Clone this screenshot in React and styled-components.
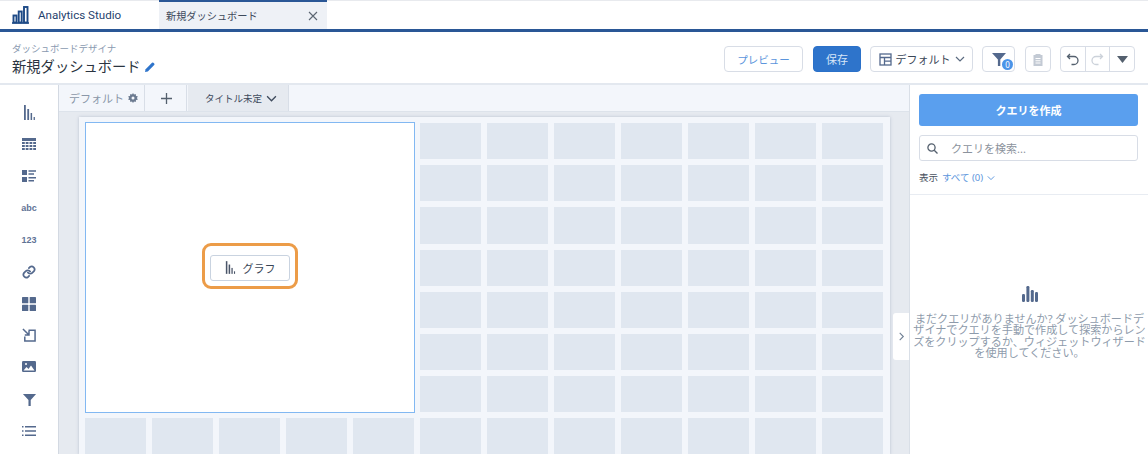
import React from "react";
import styled, { createGlobalStyle } from "styled-components";

const Global = createGlobalStyle`
  html, body { margin: 0; padding: 0; background: #fff; }
  body { width: 1148px; height: 454px; overflow: hidden; font-family: "Noto Sans", "Noto Sans CJK JP", sans-serif; color: #16325c; }
  * { box-sizing: border-box; }
`;
const Page = styled.div`width:1148px;height:454px;display:flex;flex-direction:column;overflow:hidden;`;
const TabBar = styled.div`height:32px;flex:none;display:flex;border-top:1px solid #e8eaee;border-bottom:3px solid #2a5796;background:#fff;`;
const Brand = styled.div`width:159px;display:flex;align-items:center;padding-left:12px;gap:9px;font:11.6px Roboto,sans-serif;color:#1f3f6e;svg{margin-top:-1px}`;
const OpenTab = styled.div`width:168px;margin-top:-1px;height:29px;background:#eef1f6;border-top:2px solid #2a5796;display:flex;align-items:center;justify-content:space-between;padding:0 9px 0 7px;font:10.2px "Noto Sans CJK JP",sans-serif;color:#3e4a5c;`;
const Header = styled.div`height:53px;flex:none;display:flex;justify-content:space-between;align-items:center;padding:0 13px 0 12px;border-bottom:2px solid #e3e8ef;`;
const Titles = styled.div`display:flex;flex-direction:column;gap:2px;margin-top:3px;`;
const Eyebrow = styled.div`font-size:9.5px;line-height:13px;color:#8a9ab0;`;
const TitleRow = styled.div`display:flex;align-items:center;gap:4px;font-size:14.3px;line-height:20px;color:#2b3440;`;
const Tools = styled.div`display:flex;align-items:center;margin-top:3px;`;
const Btn = styled.div`height:26px;width:${p=>p.$w}px;margin-left:${p=>p.$ml||0}px;border:1px solid ${p=>p.$primary?"#2b71c9":"#d8dde6"};border-radius:4px;background:${p=>p.$primary?"#2e74cb":"#fff"};color:${p=>p.$primary?"#d6e6f8":p.$blue?"#5b95dc":"#3a4656"};font-size:${p=>p.$fs||11}px;display:flex;align-items:center;justify-content:center;gap:${p=>p.$gap||0}px;position:relative;`;
const Group = styled.div`display:flex;margin-left:9px;height:26px;width:75px;border:1px solid #d8dde6;border-radius:4px;`;
const Seg = styled.div`flex:1;display:flex;align-items:center;justify-content:center;border-left:${p=>p.$first?"none":"1px solid #d8dde6"};`;
const Badge = styled.span`position:absolute;right:1px;bottom:1px;width:11px;height:11px;border-radius:50%;background:#4a94e8;color:#fff;font:8px/11px "Noto Sans",sans-serif;text-align:center;`;
const Body = styled.div`flex:1;display:flex;min-height:0;`;
const Rail = styled.div`width:59px;flex:none;display:flex;flex-direction:column;align-items:center;padding-top:12px;border-right:1px solid #d3d9e2;`;
const RailItem = styled.div`height:31.8px;display:flex;align-items:center;justify-content:center;flex:none;color:#5f7396;font:700 9px "Liberation Sans",sans-serif;`;
const Stage = styled.div`width:851px;flex:none;background:#e6eaf0;display:flex;flex-direction:column;position:relative;overflow:hidden;border-right:1px solid #d9dfe7;`;
const Strip = styled.div`height:27px;flex:none;background:#f3f6fb;display:flex;border-bottom:1px solid #dde3eb;padding-left:1px;`;
const StripTab = styled.div`width:${p=>p.$w}px;margin-right:1px;height:26px;display:flex;align-items:center;justify-content:center;gap:4px;padding-left:${p=>p.$pl||0}px;font-size:${p=>p.$fs||9.5}px;color:${p=>p.$c||"#3e4a5c"};background:${p=>p.$active?"#e6eaf0":"#f3f6fb"};border-right:1px solid #d8dee7;`;
const Sheet = styled.div`margin:5px 0 0 20px;width:811px;padding:6px 6px 0;background:#f3f6fb;display:grid;grid-template-columns:repeat(12,61px);grid-auto-rows:36.2px;gap:6px;flex:none;box-shadow:0 0 3px rgba(120,135,160,.4);`;
const Cell = styled.div`background:#e0e7f0;`;
const Widget = styled.div`grid-column:span 5;grid-row:span 7;width:330px;height:291px;margin-top:-1px;background:#fff;border:1px solid #82b8f2;display:flex;align-items:center;justify-content:center;`;
const Callout = styled.div`padding:9px 5px 5px;border:3px solid #ec9c48;border-radius:9px;margin-bottom:4px;`;
const ChartBtn = styled.div`width:80px;height:26px;border:1px solid #c9d3e0;border-radius:3px;display:flex;align-items:center;justify-content:center;gap:7px;font-size:11px;color:#3a4656;background:#fff;`;
const Collapse = styled.div`position:absolute;right:0;top:228px;width:16px;height:47px;background:#fff;border-radius:3px 0 0 3px;display:flex;align-items:center;justify-content:center;`;
const Panel = styled.div`flex:1;display:flex;flex-direction:column;`;
const PanelTop = styled.div`padding:9px 10px 0 9px;height:110px;border-bottom:1px solid #e8ecf2;flex:none;`;
const Create = styled.div`height:32px;background:#5a9fee;border-radius:3px;color:#fff;font-size:11px;font-weight:700;display:flex;align-items:center;justify-content:center;`;
const Search = styled.div`height:26px;margin-top:9px;border:1px solid #d8dde6;border-radius:3px;display:flex;align-items:center;padding-left:7px;gap:13px;font-size:11px;color:#8b929c;`;
const Filter = styled.div`display:flex;align-items:center;gap:4px;margin-top:9px;font-size:9.5px;color:#4a5260;line-height:15px;`;
const Link = styled.span`color:#5b95dc;`;
const Empty = styled.div`display:flex;flex-direction:column;align-items:center;padding:91px 2px 0 3px;`;
const EmptyText = styled.div`margin-top:11px;font-size:11.1px;line-height:11.4px;color:#8e9bab;text-align:center;width:100%;`;

const Bars = ({c="#54698d",w=13,h=15})=>(<svg width={w} height={h} viewBox="0 0 13 15" fill={c}><rect x="1" y="0" width="1.800" height="15"/><rect x="4.300" y="4" width="1.800" height="11"/><rect x="7.600" y="8" width="1.500" height="7"/><rect x="10.600" y="12" width="1.300" height="3"/></svg>);
const Chev = ({s=10,c="#5b6b80",w=1.2,d="down"})=>(<svg width={s} height={s} viewBox="0 0 10 10" fill="none" stroke={c} strokeWidth={w}><path d={d==="down"?"M1 3l4 4 4-4":"M3 1l4 4-4 4"}/></svg>);
const Funnel = ({s=16,c="#54698d"})=>(<svg width={s} height={s} viewBox="0 0 16 16" fill={c}><path d="M1 2h14L9.300 8.500V15H6.900V8.500z"/></svg>);

export default function App(){
  const cells=Array.from({length:12*8-35});
  return <Page><Global/>
    <TabBar>
      <Brand>
        <svg width="17" height="18" viewBox="0 0 17 18" fill="none" stroke="#1d4a86" strokeWidth="1.900"><path d="M0 17h17" strokeWidth="1.600"/><rect x="1.500" y="9.500" width="3" height="7"/><rect x="6.700" y="5.500" width="3" height="11"/><rect x="12" y="1" width="3.500" height="15.500"/></svg>
        Analytics Studio
      </Brand>
      <OpenTab>新規ダッシュボード
        <svg width="10" height="10" viewBox="0 0 10 10" stroke="#5c6672" strokeWidth="1.100"><path d="M1 1l8 8M9 1l-8 8"/></svg>
      </OpenTab>
    </TabBar>
    <Header>
      <Titles>
        <Eyebrow>ダッシュボードデザイナ</Eyebrow>
        <TitleRow>新規ダッシュボード
          <svg width="10" height="10" viewBox="0 0 10 10" fill="#2e74cb"><path d="M0 10l.6-2.800L7 .8a1 1 0 0 1 1.400 0l.8.8a1 1 0 0 1 0 1.400L2.800 9.400z"/></svg>
        </TitleRow>
      </Titles>
      <Tools>
        <Btn $w={79} $blue $fs={10.5}>プレビュー</Btn>
        <Btn $w={48} $ml={10} $primary>保存</Btn>
        <Btn $w={103} $ml={9} $gap={4}>
          <svg width="13" height="13" viewBox="0 0 13 13" fill="none" stroke="#54698d" strokeWidth="1.300"><rect x="1" y="1" width="11" height="11"/><path d="M1 4.500h11M5.500 4.500V12M5.500 8.200H12"/></svg>
          デフォルト<Chev/>
        </Btn>
        <Btn $w={33} $ml={9}><Funnel/><Badge>0</Badge></Btn>
        <Btn $w={26} $ml={10}>
          <svg width="12" height="13" viewBox="0 0 12 13" fill="#c3cad4"><path d="M1.500 2h2V1h5v1h2v11h-9zM3.500 5v1h5V5zm0 2.200v1h5v-1zm0 2.200v1h5v-1z" fillRule="evenodd"/></svg>
        </Btn>
        <Group>
          <Seg $first><svg width="13" height="13" viewBox="0 0 13 13" fill="none" stroke="#54606e" strokeWidth="1.300"><path d="M4 1L1.500 3.500 4 6M1.500 3.500H8a3.500 3.500 0 0 1 0 8H5.500"/></svg></Seg>
          <Seg><svg width="13" height="13" viewBox="0 0 13 13" fill="none" stroke="#ccd2da" strokeWidth="1.300"><path d="M9 1l2.500 2.500L9 6M11.500 3.500H5a3.500 3.500 0 0 0 0 8h2.500"/></svg></Seg>
          <Seg><svg width="11" height="7" viewBox="0 0 11 7" fill="#54606e"><path d="M0 0h11L5.500 7z"/></svg></Seg>
        </Group>
      </Tools>
    </Header>
    <Body>
      <Rail>
        <RailItem><Bars/></RailItem>
        <RailItem><svg width="14" height="14" viewBox="0 0 14 14" fill="#54698d"><path d="M0 0h14v3H0z"/><path d="M0 4h2.800v2H0zM3.700 4h2.800v2H3.700zM7.500 4h2.800v2H7.500zM11.200 4H14v2h-2.800zM0 7h2.800v2H0zM3.700 7h2.800v2H3.700zM7.500 7h2.800v2H7.500zM11.200 7H14v2h-2.800zM0 10h2.800v2H0zM3.700 10h2.800v2H3.700zM7.500 10h2.800v2H7.500zM11.200 10H14v2h-2.800z"/></svg></RailItem>
        <RailItem><svg width="14" height="12" viewBox="0 0 14 12" fill="#54698d"><path d="M0 0h5v5H0zM0 7h5v5H0zM6.500 .3H14v1.500H6.500zM6.500 3.200H12v1.500H6.500zM6.500 7H14v1.500H6.500zM6.500 10H12v1.500H6.500z"/></svg></RailItem>
        <RailItem>abc</RailItem>
        <RailItem>123</RailItem>
        <RailItem><svg width="14" height="14" viewBox="0 0 24 24" fill="none" stroke="#54698d" strokeWidth="3" strokeLinecap="round"><path d="M10 13a5 5 0 0 0 7.500.5l3-3a5 5 0 0 0-7-7l-1.700 1.700"/><path d="M14 11a5 5 0 0 0-7.500-.5l-3 3a5 5 0 0 0 7 7l1.700-1.700"/></svg></RailItem>
        <RailItem><svg width="14" height="14" viewBox="0 0 14 14" fill="#54698d"><rect width="6.300" height="6.300" rx=".6"/><rect x="7.700" width="6.300" height="6.300" rx=".6"/><rect y="7.700" width="6.300" height="6.300" rx=".6"/><rect x="7.700" y="7.700" width="6.300" height="6.300" rx=".6"/></svg></RailItem>
        <RailItem><svg width="14" height="14" viewBox="0 0 15 15" fill="none" stroke="#54698d" strokeWidth="1.600"><path d="M7 2.500h7v11.500H3V9"/><path d="M1 1l6 6M7.500 3v4.500H3"/></svg></RailItem>
        <RailItem><svg width="14" height="12" viewBox="0 0 14 12"><rect width="14" height="11" rx="1.200" fill="#54698d"/><path d="M1.500 9.500l3-3.500 2 2 2.500-3.500 3.500 5z" fill="#fff"/><circle cx="4" cy="3" r="1" fill="#fff"/></svg></RailItem>
        <RailItem><Funnel s={15}/></RailItem>
        <RailItem><svg width="14" height="12" viewBox="0 0 14 12" fill="#54698d"><path d="M0 1h1.500v1.500H0zM3 1h11v1.500H3zM0 5.200h1.500v1.500H0zM3 5.200h11v1.500H3zM0 9.500h1.500V11H0zM3 9.500h11V11H3z"/></svg></RailItem>
      </Rail>
      <Stage>
        <Strip>
          <StripTab $w={85} $fs={11} $c="#8a97a8" $pl={3}>デフォルト
            <svg width="10" height="10" viewBox="0 0 10 10" fill="#6b7a90"><path d="M5 0l1 1.500 1.700-.4.300 1.800 1.800.4L9 5l.8 1.700-1.800.4-.3 1.800L6 8.500 5 10 4 8.500l-1.700.4-.3-1.800-1.800-.4L1 5 .2 3.300 2 2.900l.3-1.800L4 1.500z"/><circle cx="5" cy="5" r="1.500" fill="#f3f6fb"/></svg>
          </StripTab>
          <StripTab $w={41}><svg width="11" height="11" viewBox="0 0 11 11" stroke="#54606e" strokeWidth="1.300"><path d="M5.500 0v11M0 5.500h11"/></svg></StripTab>
          <StripTab $w={101} $active $pl={6}>タイトル未定<Chev c="#3e4a5c" s={11}/></StripTab>
        </Strip>
        <Sheet>
          <Widget><Callout><ChartBtn><Bars c="#4a5568" w={11} h={13}/>グラフ</ChartBtn></Callout></Widget>
          {cells.map((_,i)=><Cell key={i}/>)}
        </Sheet>
        <Collapse><Chev d="right" c="#6f7f94" s={9}/></Collapse>
      </Stage>
      <Panel>
        <PanelTop>
          <Create>クエリを作成</Create>
          <Search>
            <svg width="11" height="11" viewBox="0 0 11 11" fill="none" stroke="#54606e" strokeWidth="1.300"><circle cx="4.500" cy="4.500" r="3.600"/><path d="M7.200 7.200L10.500 10.500"/></svg>
            <span>クエリを検索...</span>
          </Search>
          <Filter>表示 <Link>すべて (0)</Link><Chev c="#5b95dc" s={8}/></Filter>
        </PanelTop>
        <Empty>
          <svg width="16" height="16" viewBox="0 0 16 16" fill="#54698d"><rect x="0" y="8" width="3" height="8" rx="1.200"/><rect x="4.400" y="0" width="3" height="16" rx="1.200"/><rect x="8.800" y="4" width="3" height="12" rx="1.200"/><rect x="13" y="6" width="3" height="10" rx="1.200"/></svg>
          <EmptyText>まだクエリがありませんか? ダッシュボードデザイナでクエリを手動で作成して探索からレンズをクリップするか、ウィジェットウィザードを使用してください。</EmptyText>
        </Empty>
      </Panel>
    </Body>
  </Page>;
}
